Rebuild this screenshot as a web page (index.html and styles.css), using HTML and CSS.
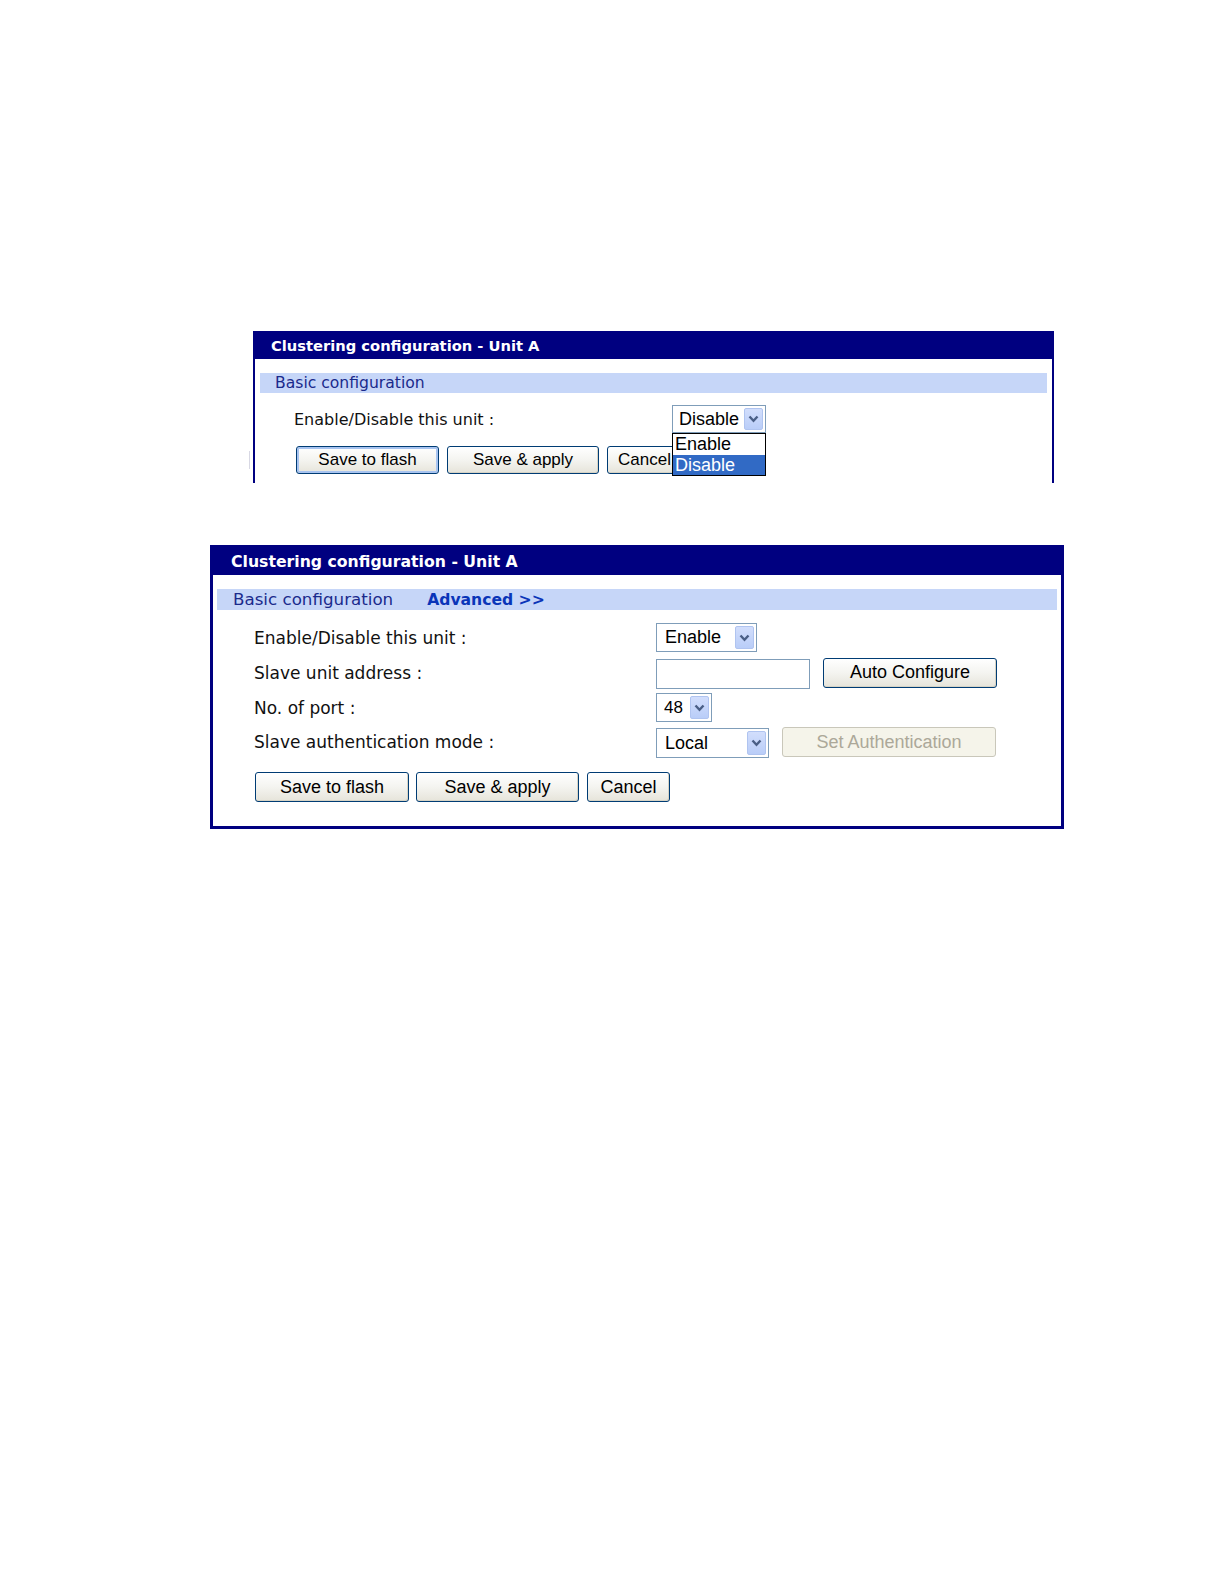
FILE: index.html
```html
<!DOCTYPE html>
<html>
<head>
<meta charset="utf-8">
<title>Clustering configuration</title>
<link rel="stylesheet" href="styles.css">
</head>
<body>
<div class="page">
  <div class="panel p1">
    <div class="head">Clustering configuration - Unit A</div>
    <div class="bar"><span class="bar-link">Basic configuration</span></div>
    <div class="form">
      <div class="row r1">
        <div class="label">Enable/Disable this unit :</div>
        <div class="controls">
          <div class="sel sel-p1">
            <span class="sel-val">Disable</span>
            <span class="sel-btn"><svg width="11" height="8" viewBox="0 0 11 8"><polyline points="1.5,1.5 5.5,5.8 9.5,1.5" fill="none" stroke="#4a5f86" stroke-width="2.4"/></svg></span>
            <div class="dropdown">
              <div class="opt">Enable</div>
              <div class="opt opt-sel">Disable</div>
            </div>
          </div>
        </div>
      </div>
      <div class="btns">
        <button class="btn b-flash1 focus">Save to flash</button>
        <button class="btn b-apply1">Save &amp; apply</button>
        <button class="btn b-cancel1">Cancel</button>
      </div>
    </div>
    <span class="tick"></span>
  </div>

  <div class="panel p2">
    <div class="head">Clustering configuration - Unit A</div>
    <div class="bar"><span class="bar-link">Basic configuration</span><span class="bar-adv">Advanced &gt;&gt;</span></div>
    <div class="form">
      <div class="row ra">
        <div class="label">Enable/Disable this unit :</div>
        <div class="controls">
          <div class="sel sel-enable">
            <span class="sel-val">Enable</span>
            <span class="sel-btn"><svg width="11" height="8" viewBox="0 0 11 8"><polyline points="1.5,1.5 5.5,5.8 9.5,1.5" fill="none" stroke="#4a5f86" stroke-width="2.4"/></svg></span>
          </div>
        </div>
      </div>
      <div class="row rb">
        <div class="label">Slave unit address :</div>
        <div class="controls">
          <div class="input"></div>
          <button class="btn b-auto">Auto Configure</button>
        </div>
      </div>
      <div class="row rc">
        <div class="label">No. of port :</div>
        <div class="controls">
          <div class="sel sel-port">
            <span class="sel-val">48</span>
            <span class="sel-btn"><svg width="11" height="8" viewBox="0 0 11 8"><polyline points="1.5,1.5 5.5,5.8 9.5,1.5" fill="none" stroke="#4a5f86" stroke-width="2.4"/></svg></span>
          </div>
        </div>
      </div>
      <div class="row rd">
        <div class="label">Slave authentication mode :</div>
        <div class="controls">
          <div class="sel sel-local">
            <span class="sel-val">Local</span>
            <span class="sel-btn"><svg width="11" height="8" viewBox="0 0 11 8"><polyline points="1.5,1.5 5.5,5.8 9.5,1.5" fill="none" stroke="#4a5f86" stroke-width="2.4"/></svg></span>
          </div>
          <button class="btn b-auth" disabled>Set Authentication</button>
        </div>
      </div>
      <div class="btns">
        <button class="btn b-flash2">Save to flash</button>
        <button class="btn b-apply2">Save &amp; apply</button>
        <button class="btn b-cancel2">Cancel</button>
      </div>
    </div>
  </div>
</div>
</body>
</html>
```
FILE: styles.css
```css
html, body {
  margin: 0;
  padding: 0;
  background: #ffffff;
}
.page {
  width: 1224px;
  height: 1584px;
  padding-top: 331px;
  box-sizing: border-box;
  font-family: "DejaVu Sans", Verdana, sans-serif;
  color: #111111;
}
.panel {
  box-sizing: border-box;
  border: 2px solid #000080;
  background: #ffffff;
  position: relative;
}
.head {
  background: #000080;
  color: #ffffff;
  font-weight: bold;
  white-space: nowrap;
}
.bar {
  background: #c6d6f8;
  color: #1a2a8c;
  white-space: nowrap;
}
.bar-adv {
  font-weight: bold;
  color: #0a35b8;
}
.row {
  display: flex;
  align-items: center;
}
.label {
  flex: none;
  white-space: nowrap;
}
.controls {
  display: flex;
  align-items: center;
}
.btns {
  display: flex;
  align-items: center;
}

/* select */
.sel {
  box-sizing: border-box;
  border: 1px solid #7f9db9;
  background: #ffffff;
  display: flex;
  align-items: stretch;
  justify-content: space-between;
  padding: 2px;
  position: relative;
  font-family: "Liberation Sans", Arial, sans-serif;
  color: #000000;
}
.sel-val {
  display: flex;
  align-items: center;
  padding-left: 4px;
  white-space: nowrap;
}
.sel-btn {
  flex: none;
  width: 19px;
  box-sizing: border-box;
  border: 1px solid #b0c4f0;
  border-radius: 2px;
  background: linear-gradient(#d2defc, #b9cdf8);
  display: flex;
  align-items: center;
  justify-content: center;
}

/* buttons */
.btn {
  box-sizing: border-box;
  margin: 0;
  padding: 0;
  border: 1px solid #003c74;
  border-radius: 3px;
  background: linear-gradient(#ffffff 0%, #f4f4f0 50%, #e6e4da 100%);
  font-family: "Liberation Sans", Arial, sans-serif;
  color: #000000;
  white-space: nowrap;
  text-align: center;
  box-shadow: inset -1px -1px 0 #d6d3c5;
}
.btn.focus {
  box-shadow: inset 0 0 0 2px #a8c4f0;
}
.btn[disabled] {
  border-color: #c9c7ba;
  background: #f5f4ea;
  color: #aca899;
  box-shadow: none;
}
.input {
  box-sizing: border-box;
  border: 1px solid #7f9db9;
  background: #ffffff;
}

/* ---------- panel 1 (cropped) ---------- */
.p1 {
  margin-left: 253px;
  width: 801px;
  height: 152px;
  border-bottom: none;
}
.p1 .head {
  height: 26px;
  line-height: 26px;
  font-size: 14.7px;
  padding-left: 18px;
  margin: -2px -2px 0 -2px;
  padding-top: 2px;
}
.p1 .bar {
  margin: 14px 5px 0 5px;
  height: 20px;
  line-height: 20px;
  padding-left: 15px;
  font-size: 15.6px;
}
.p1 .form {
  padding-left: 39px;
}
.p1 .row {
  margin-top: 12px;
  height: 28px;
}
.p1 .label {
  width: 378px;
  font-size: 16px;
}
.sel-p1 {
  width: 94px;
  height: 28px;
  font-size: 18px;
}
.sel-p1 .sel-val {
  padding-left: 4px;
}
.dropdown {
  position: absolute;
  left: -1px;
  top: 27px;
  width: 94px;
  box-sizing: border-box;
  border: 1px solid #000000;
  background: #ffffff;
  z-index: 5;
  font-size: 18px;
}
.opt {
  height: 20.5px;
  line-height: 20.5px;
  padding-left: 2px;
}
.opt-sel {
  background: #316ac5;
  color: #ffffff;
}
.p1 .btns {
  margin-top: 13px;
  margin-left: 2px;
  gap: 8px;
}
.p1 .btn {
  height: 28px;
  font-size: 17px;
}
.b-flash1 { width: 143px; }
.b-apply1 { width: 152px; }
.b-cancel1 { width: 79px; text-align: left; padding-left: 10px; }
.tick {
  position: absolute;
  left: -6px;
  top: 118px;
  width: 1px;
  height: 18px;
  background: #d8d8e4;
}

/* ---------- panel 2 ---------- */
.p2 {
  margin-top: 62px;
  margin-left: 210px;
  width: 854px;
  height: 284px;
  border-width: 3px;
}
.p2 .head {
  height: 27px;
  line-height: 28px;
  font-size: 15.7px;
  padding-left: 18px;
}
.p2 .bar {
  margin: 14px 4px 0 4px;
  height: 21px;
  line-height: 21px;
  padding-left: 16px;
  font-size: 16.7px;
}
.bar-adv {
  margin-left: 34px;
  font-size: 15.6px;
}
.p2 .form {
  padding-left: 41px;
}
.p2 .label {
  width: 402px;
  font-size: 17px;
}
.p2 .sel {
  font-size: 18px;
}
.p2 .sel-val {
  padding-left: 6px;
}
.ra { margin-top: 13px; height: 29px; }
.rb { margin-top: 5px; height: 31px; }
.rc { margin-top: 5px; height: 29px; }
.rd { margin-top: 4px; height: 32px; }
.sel-enable { width: 101px; height: 29px; }
.input { width: 154px; height: 30px; margin-top: 2px; }
.b-auto { width: 174px; height: 30px; margin-left: 13px; font-size: 18.3px; }
.sel-port { width: 56px; height: 29px; }
.sel-port .sel-val { padding-left: 5px; font-size: 17px; }
.sel-local { width: 113px; height: 30px; margin-top: 2px; }
.b-auth { width: 214px; height: 31px; margin-left: 13px; font-size: 18.5px; }
.p2 .btns {
  margin-top: 14px;
  margin-left: 1px;
}
.p2 .btn {
  height: 30px;
  font-size: 18px;
}
.b-flash2 { width: 154px; }
.b-apply2 { width: 163px; margin-left: 7px; }
.b-cancel2 { width: 83px; margin-left: 8px; }
```
